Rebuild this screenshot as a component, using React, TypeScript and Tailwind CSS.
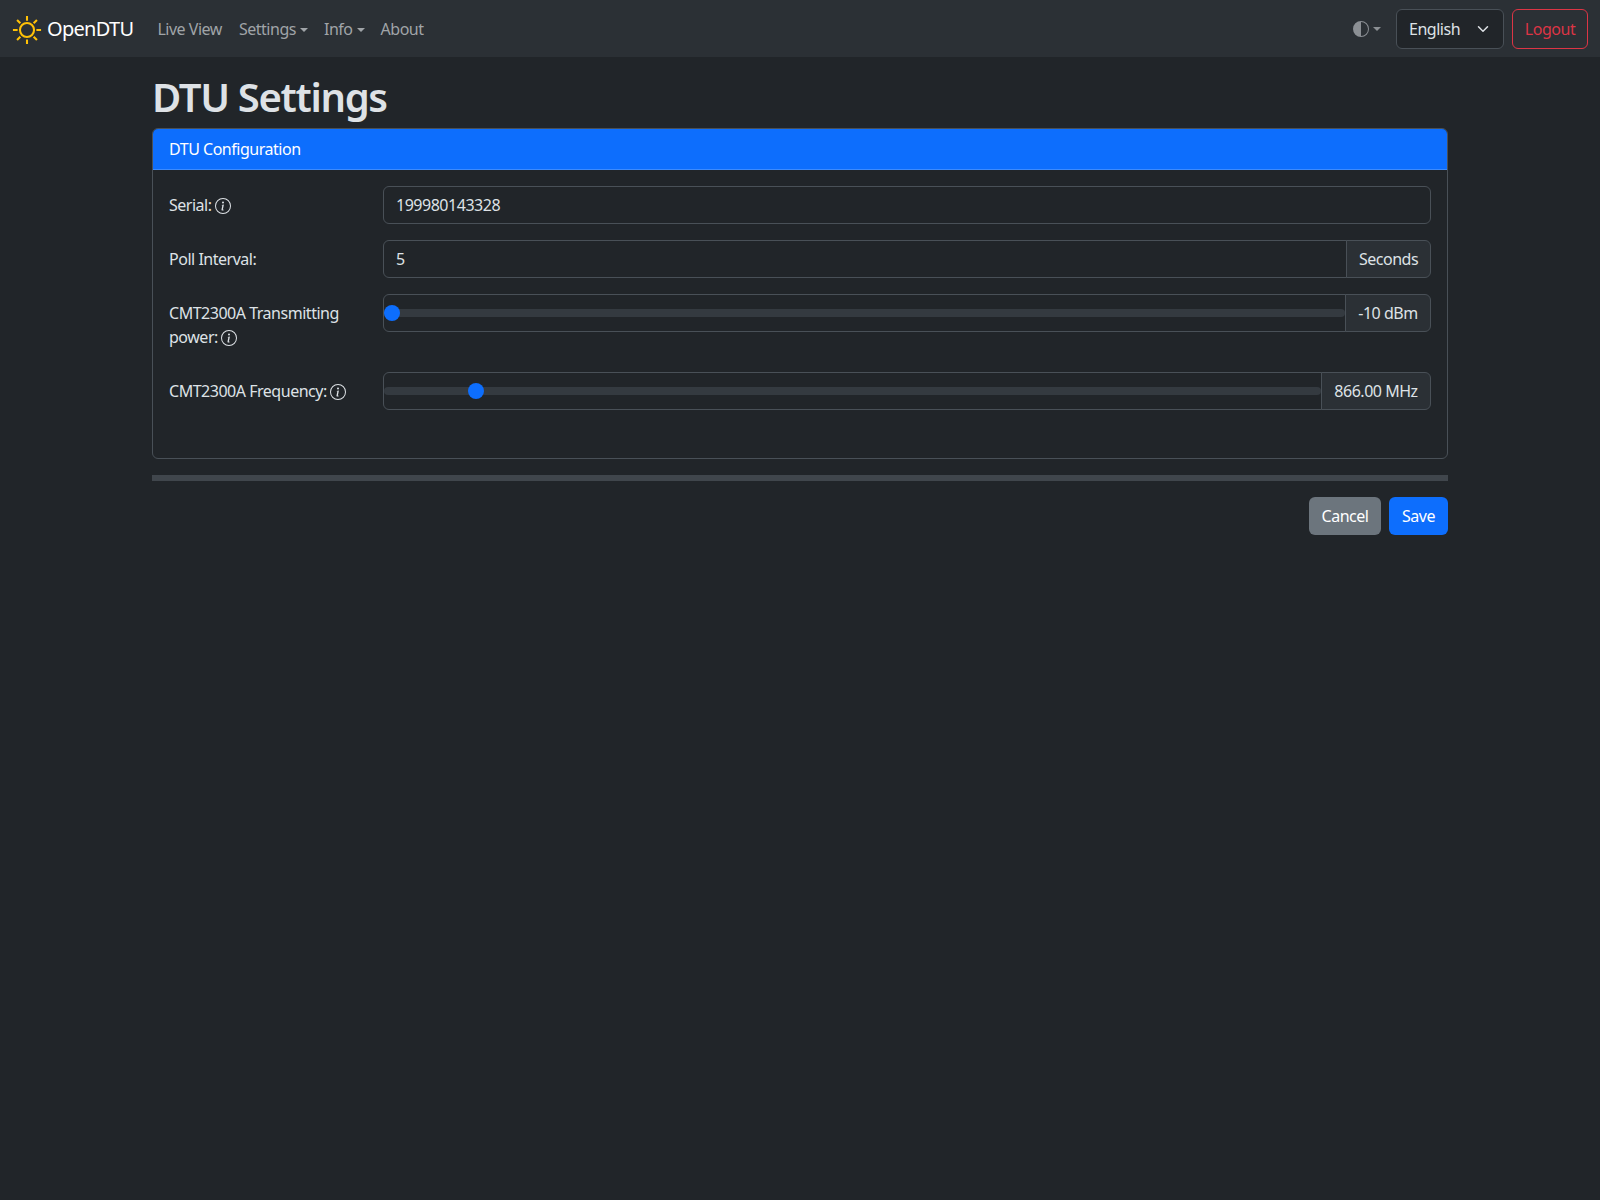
import React from "react";

const font = "font-['Segoe_UI','Noto_Sans',sans-serif]";

function Info() {
  return (
    <svg viewBox="0 0 16 16" className="inline-block w-4 h-4 align-[-3px] ml-[3px]" fill="currentColor">
      <path d="M8 15A7 7 0 1 1 8 1a7 7 0 0 1 0 14zm0 1A8 8 0 1 0 8 0a8 8 0 0 0 0 16z" />
      <path d="m8.93 6.588-2.29.287-.082.38.45.083c.294.07.352.176.288.469l-.738 3.468c-.194.897.105 1.319.808 1.319.545 0 1.178-.252 1.465-.598l.088-.416c-.2.176-.492.246-.686.246-.275 0-.375-.193-.304-.533L8.93 6.588zM9 4.5a1 1 0 1 1-2 0 1 1 0 0 1 2 0z" />
    </svg>
  );
}

function Sun() {
  return (
    <svg viewBox="0 0 32 32" className="w-[30px] h-[30px] mt-[2px]" fill="none" stroke="#ffc107" strokeWidth="2.2">
      <circle cx="16" cy="16" r="7.5" />
      <path d="M16 1v5M16 26v5M1 16h5M26 16h5M5.4 5.4l3.5 3.5M23.1 23.1l3.5 3.5M5.4 26.6l3.5-3.5M23.1 8.9l3.5-3.5" />
    </svg>
  );
}

function Caret() {
  return <span className="inline-block ml-1 align-[3px] w-0 h-0 border-x-4 border-x-transparent border-t-4 border-t-current" />;
}

const rangeCls =
  "block w-full h-4 appearance-none bg-transparent cursor-pointer [&::-webkit-slider-runnable-track]:h-2 [&::-webkit-slider-runnable-track]:rounded-lg [&::-webkit-slider-runnable-track]:bg-[#343a40] [&::-webkit-slider-thumb]:appearance-none [&::-webkit-slider-thumb]:w-4 [&::-webkit-slider-thumb]:h-4 [&::-webkit-slider-thumb]:-mt-1 [&::-webkit-slider-thumb]:rounded-full [&::-webkit-slider-thumb]:bg-[#0d6efd] [&::-webkit-slider-thumb]:border-0";

function Addon({ children, w }: { children: React.ReactNode; w: string }) {
  return (
    <span className={`flex items-center justify-center shrink-0 ${w} -ml-px bg-[#2b3035] border border-[#495057] rounded-r-md text-[#dee2e6] text-[16px]`}>
      {children}
    </span>
  );
}

function Row({ label, children, cls = "mb-4" }: { label: React.ReactNode; children: React.ReactNode; cls?: string }) {
  return (
    <div className={`flex ${cls}`}>
      <label className="w-[214px] shrink-0 pr-6 py-[7px] leading-6">{label}</label>
      <div className="flex-1 min-w-0 flex h-[38px]">{children}</div>
    </div>
  );
}

export default function App() {
  return (
    <div className={`min-h-[1200px] bg-[#212529] text-[#dee2e6] text-[16px] leading-6 tracking-[-0.03em] ${font}`}>
      <nav className="h-[57px] bg-[#2b3035] flex items-center px-3 text-[#a0a4a8]">
        <a className="flex items-center text-white text-[20px] tracking-[-0.035em] mr-4">
          <Sun />
          <span className="ml-[5px]">OpenDTU</span>
        </a>
        <div className="flex items-center">
          <a className="pl-2 pr-[9px] py-2">Live View</a>
          <a className="px-2 py-2">Settings<Caret /></a>
          <a className="px-2 py-2">Info<Caret /></a>
          <a className="px-2 py-2">About</a>
        </div>
        <div className="ml-auto flex items-center">
          <a className="flex items-center text-[#8b8f94] mr-[15px]">
            <svg viewBox="0 0 16 16" className="w-4 h-4" fill="currentColor">
              <path d="M8 15A7 7 0 1 0 8 1v14zm0 1A8 8 0 1 1 8 0a8 8 0 0 1 0 16z" />
            </svg>
            <Caret />
          </a>
          <div className="flex items-center justify-between w-[108px] h-10 pl-3 pr-3 mr-2 rounded-md border border-[#495057] bg-[#212529] text-[#dee2e6]">
            <span>English</span>
            <svg viewBox="0 0 16 16" className="w-4 h-3" fill="none" stroke="#dee2e6" strokeWidth="2" strokeLinecap="round" strokeLinejoin="round">
              <path d="m2 5 6 6 6-6" />
            </svg>
          </div>
          <button className="h-10 w-[76px] rounded-md border border-[#dc3545] text-[#dc3545]">Logout</button>
        </div>
      </nav>

      <main className="w-[1296px] mx-auto">
        <h1 className="text-[40px] leading-[48px] font-semibold tracking-[-0.033em] mt-[16px] mb-[7px] text-[#dee2e6]">DTU Settings</h1>

        <section className="rounded-md border border-[#495057]">
          <header className="h-[41px] px-4 flex items-center bg-[#0d6efd] text-white rounded-t-[5px] border-b border-[#3d8bfd]">DTU Configuration</header>
          <div className="px-4 pt-4 pb-8">
            <Row label={<>Serial:<Info /></>}>
              <div className="flex-1 h-full flex items-center px-3 rounded-md border border-[#495057]">199980143328</div>
            </Row>
            <Row label="Poll Interval:">
              <div className="flex-1 h-full flex items-center px-3 rounded-l-md border border-[#495057]">5</div>
              <Addon w="w-[85px]">Seconds</Addon>
            </Row>
            <Row label={<>CMT2300A Transmitting power:<Info /></>}>
              <div className="flex-1 h-full flex items-center rounded-l-md border border-[#495057]">
                <input type="range" readOnly min={-10} max={20} defaultValue={-10} className={rangeCls} />
              </div>
              <Addon w="w-[86px]">-10 dBm</Addon>
            </Row>
            <Row label={<>CMT2300A Frequency:<Info /></>}>
              <div className="flex-1 h-full flex items-center rounded-l-md border border-[#495057]">
                <input type="range" readOnly min={860} max={926} step={0.25} defaultValue={866} className={rangeCls} />
              </div>
              <Addon w="w-[110px]">866.00 MHz</Addon>
            </Row>
          </div>
        </section>

        <hr className="h-[6px] my-[16px] bg-[#40464c] border-0" />

        <div className="flex justify-end gap-2">
          <button className="h-[38px] w-[72px] rounded-md bg-[#6c757d] text-white">Cancel</button>
          <button className="h-[38px] w-[59px] rounded-md bg-[#0d6efd] text-white">Save</button>
        </div>
      </main>
    </div>
  );
}
